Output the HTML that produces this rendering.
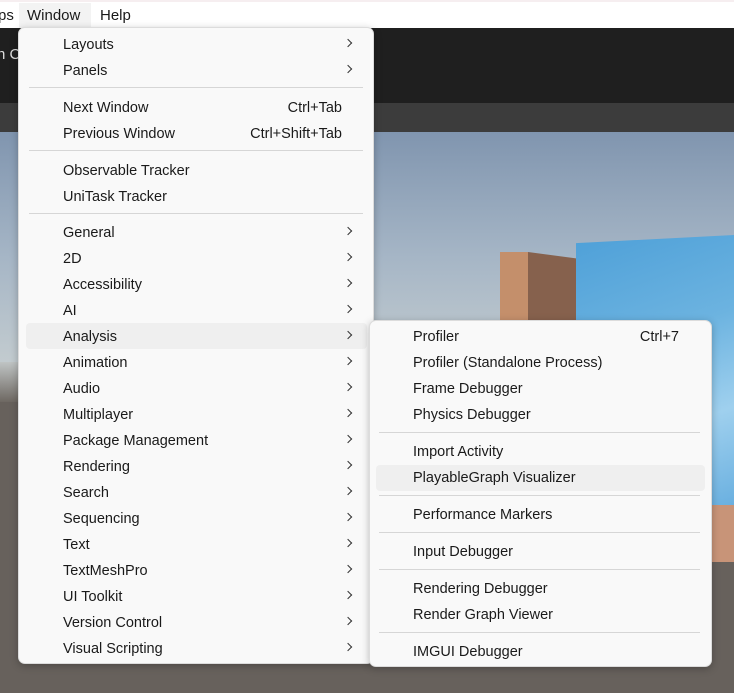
<!DOCTYPE html>
<html><head><style>
*{margin:0;padding:0;box-sizing:border-box}
body{width:734px;height:693px;overflow:hidden;position:relative;font-family:"Liberation Sans",sans-serif;font-size:14.5px;color:#1a1a1a;background:#67615c}
.abs{position:absolute}
.menu{position:absolute;background:#f9f9f9;border:1px solid #dcdcdc;border-radius:7px;box-shadow:0 2px 8px rgba(0,0,0,.25)}
.arr{position:absolute;width:6px;height:6px;border-right:1.3px solid #333;border-top:1.3px solid #333;transform:rotate(45deg)}
.sep{position:absolute;height:1px;background:#d6d6d6}
.hl{position:absolute;background:#efefef;border-radius:4px}
</style></head><body>
<div class="abs" style="left:0;top:0;width:734px;height:28px;background:#fff;border-top:2px solid #f6eef0"></div>
<div class="abs" style="left:0;top:28px;width:734px;height:75px;background:#1f1f1f"></div>
<div class="abs" style="left:0;top:103px;width:734px;height:29px;background:#3c3c3c"></div>
<div class="abs" style="left:0;top:132px;width:734px;height:230px;background:linear-gradient(#8095af,#a6b6c6 55%,#c2cbcf)"></div>
<div class="abs" style="left:0;top:362px;width:734px;height:40px;background:linear-gradient(#bfc4c4,#6e6862)"></div>
<div class="abs" style="left:500px;top:252px;width:28px;height:80px;background:#c48f6b"></div>
<div class="abs" style="left:528px;top:252px;width:48px;height:80px;background:#86614d;clip-path:polygon(0 0,100% 8%,100% 100%,0 100%)"></div>
<div class="abs" style="left:576px;top:235px;width:158px;height:270px;background:linear-gradient(160deg,#4ea0d8,#6cb3e0 40%,#9fd0ee 70%,#6ab0e0);clip-path:polygon(0 3%,100% 0,100% 100%,0 100%)"></div>
<div class="abs" style="left:710px;top:505px;width:24px;height:57px;background:#c89478"></div>
<div class="abs" style="top:46px;color:#ddd;font-size:15px;left:-3px">n C</div>
<div class="abs" style="left:-2px;top:7px;font-size:15px">ps</div>
<div class="abs" style="left:19px;top:3px;width:72px;height:25px;background:#f3f3f3"></div>
<div class="abs" style="left:27px;top:7px;font-size:15px">Window</div>
<div class="abs" style="left:100px;top:7px;font-size:15px">Help</div>

<div class="menu" style="left:18px;top:27px;width:356px;height:637px">
<div class="hl" style="left:7px;top:295px;width:341px;height:26px"></div>
</div>
<div class="menu" style="left:369px;top:320px;width:343px;height:347px">
<div class="hl" style="left:6px;top:144px;width:329px;height:26px"></div>
</div>
<div class="abs" style="left:0;top:0;width:734px;height:693px">
<script>
var m=[["Layouts",44,1],["Panels",70,1],["sep",87],["Next Window",107,0,"Ctrl+Tab"],["Previous Window",133,0,"Ctrl+Shift+Tab"],["sep",150],["Observable Tracker",170],["UniTask Tracker",196],["sep",213]];
var n=["General","2D","Accessibility","AI","Analysis","Animation","Audio","Multiplayer","Package Management","Rendering","Search","Sequencing","Text","TextMeshPro","UI Toolkit","Version Control","Visual Scripting"];
n.forEach(function(x,i){m.push([x,232+26*i,1])});
var h="";
m.forEach(function(r){
 if(r[0]=="sep"){h+='<div class="sep" style="left:29px;width:334px;top:'+r[1]+'px"></div>';return;}
 h+='<div class="abs" style="left:63px;top:'+(r[1]-8)+'px;line-height:18px">'+r[0]+'</div>';
 if(r[2])h+='<div class="arr" style="left:345px;top:'+(r[1]-4)+'px"></div>';
 if(r[3])h+='<div class="abs" style="right:392px;top:'+(r[1]-8)+'px;line-height:18px">'+r[3]+'</div>';
});
var s=[["Profiler",336,"Ctrl+7"],["Profiler (Standalone Process)",362],["Frame Debugger",388],["Physics Debugger",414],["sep",432],["Import Activity",451],["PlayableGraph Visualizer",477],["sep",495],["Performance Markers",514],["sep",532],["Input Debugger",551],["sep",569],["Rendering Debugger",588],["Render Graph Viewer",614],["sep",632],["IMGUI Debugger",651]];
s.forEach(function(r){
 if(r[0]=="sep"){h+='<div class="sep" style="left:379px;width:321px;top:'+r[1]+'px"></div>';return;}
 h+='<div class="abs" style="left:413px;top:'+(r[1]-8)+'px;line-height:18px">'+r[0]+'</div>';
 if(r[2])h+='<div class="abs" style="right:55px;top:'+(r[1]-8)+'px;line-height:18px">'+r[2]+'</div>';
});
document.write(h);
</script>
</div>
</body></html>
